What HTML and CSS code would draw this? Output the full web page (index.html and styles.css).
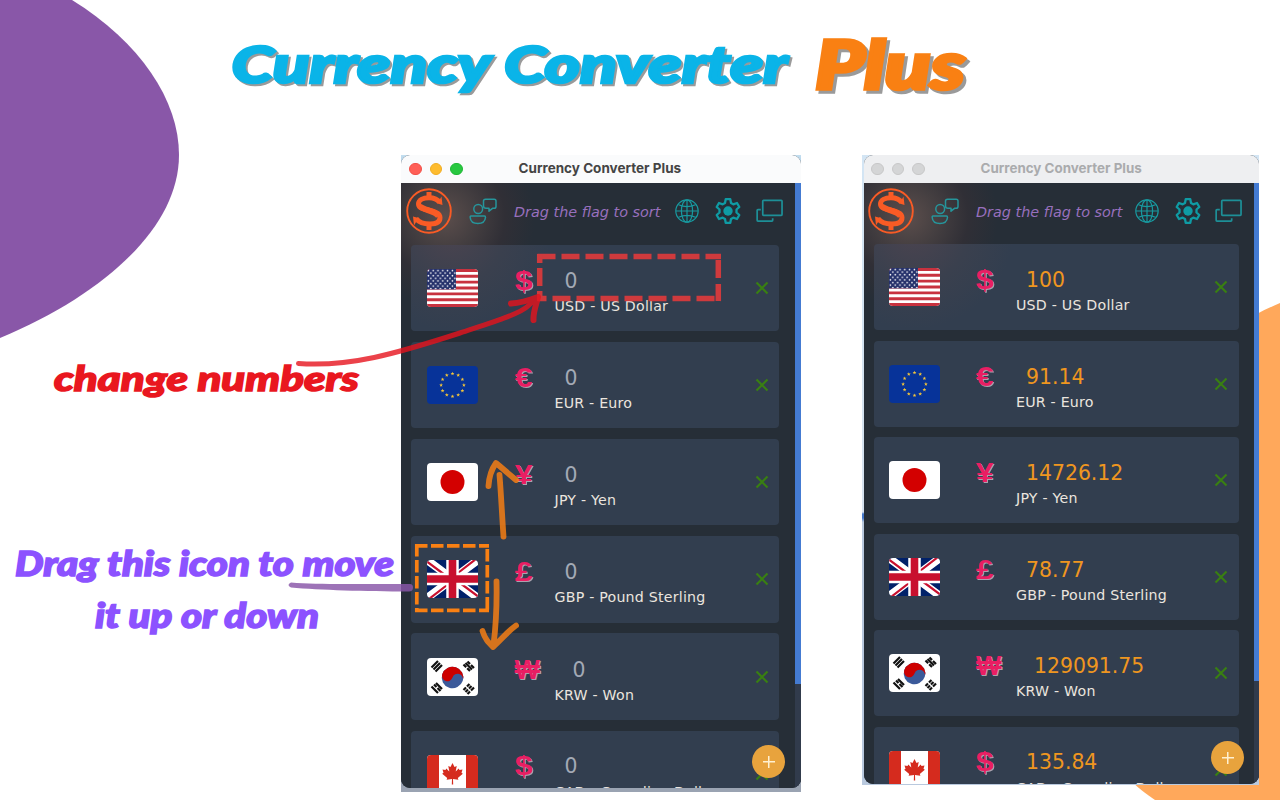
FILE: index.html
```
<!DOCTYPE html>
<html lang="en">
<head>
<meta charset="utf-8">
<title>Currency Converter Plus</title>
<link rel="stylesheet" href="styles.css">
</head>
<body>
<svg class="defs" width="0" height="0">
  <defs>
    <clipPath id="round"><rect width="51" height="38" rx="4"/></clipPath>
    <pattern id="stars" width="4.8" height="5.2" patternUnits="userSpaceOnUse"><circle cx="1.4" cy="1.5" r=".8" fill="#fff"/><circle cx="3.8" cy="4.1" r=".8" fill="#fff"/></pattern>
    <symbol id="us" viewBox="0 0 51 38"><g clip-path="url(#round)"><rect width="51" height="38" fill="#fff"/><path d="M0 1.46H51M0 7.3H51M0 13.15H51M0 19H51M0 24.85H51M0 30.7H51M0 36.54H51" stroke="#c8323f" stroke-width="2.92"/><rect width="29" height="20.4" fill="#25316b"/><rect width="29" height="20.4" fill="url(#stars)"/></g></symbol>
    <symbol id="eu" viewBox="0 0 51 38"><rect width="51" height="38" rx="4" fill="#073399"/><g fill="#f5c638" transform="translate(25.5 19)"><path id="st" d="M0-13.3l.5 1.3h1.4l-1.1.9.4 1.4L0-10.5l-1.2.8.4-1.4-1.1-.9H-.5Z"/><use href="#st" x="5.7" y="1.5"/><use href="#st" x="9.9" y="5.7"/><use href="#st" x="11.4" y="11.4"/><use href="#st" x="9.9" y="17.1"/><use href="#st" x="5.7" y="21.3"/><use href="#st" y="22.8"/><use href="#st" x="-5.7" y="21.3"/><use href="#st" x="-9.9" y="17.1"/><use href="#st" x="-11.4" y="11.4"/><use href="#st" x="-9.9" y="5.7"/><use href="#st" x="-5.7" y="1.5"/></g></symbol>
    <symbol id="jp" viewBox="0 0 51 38"><rect width="51" height="38" rx="4" fill="#fff"/><circle cx="25.5" cy="19" r="12" fill="#d30000"/></symbol>
    <symbol id="gb" viewBox="0 0 51 38"><g clip-path="url(#round)"><rect width="51" height="38" fill="#012169"/><path d="M0 0L51 38M51 0L0 38" stroke="#fff" stroke-width="8"/><path d="M-1 1L20 16.5M52 37L31 21.5M49 -1L29 14.5M2 39L22 23.5" stroke="#c8102e" stroke-width="2.2"/><path d="M25.5 0V38M0 19H51" stroke="#fff" stroke-width="12.5"/><path d="M25.5 0V38M0 19H51" stroke="#c8102e" stroke-width="7.6"/></g></symbol>
    <symbol id="kr" viewBox="0 0 51 38"><rect width="51" height="38" rx="4" fill="#fff"/><g transform="rotate(18 25.5 19.5)"><circle cx="25.5" cy="19.5" r="10.8" fill="#3b5a9a"/><path d="M14.7 19.5a10.8 10.8 0 0 1 21.6 0a5.4 5.4 0 0 0-10.8 0a5.4 5.4 0 0 1-10.8 0Z" fill="#cd0000"/></g><g stroke="#111" stroke-width="2.2"><path d="M4.5 9.5L11 3M6.5 11.5L13 5M8.5 13.5L15 7"/><path d="M36.500 6.500L39.200 9.200M40.200 10.200L43 13M38.500 5L45 11.500M40.500 3.500L43 6M44 7L47 10"/><path d="M4.500 28.500L11 35M7 26.500L9.500 29M10.500 30L13.500 33M9 25L15 31"/><path d="M36.500 32L39 29.500M40 28.500L42.500 26M38.500 34L41 31.500M42 30.500L44.500 28M40.500 36L43 33.500M44 32.500L47 29.500"/></g></symbol>
    <symbol id="ca" viewBox="0 0 51 38"><g clip-path="url(#round)"><rect width="51" height="38" fill="#fff"/><path d="M0 0H12V38H0ZM39 0H51V38H39Z" fill="#d52b1e"/><path d="M25.500 8l2 4 2.200-1-1 5.500 3-3 .8 1.600 3-.5-1 3.200 1.300.9-5 4.300.6 1.700-5.400-.7.200 5.500h-1.400l.2-5.500-5.400.7.600-1.700-5-4.300 1.300-.9-1-3.200 3 .5.800-1.600 3 3-1-5.500 2.200 1Z" fill="#d52b1e"/></g></symbol>
    <symbol id="logo" viewBox="0 0 46 46"><g fill="none" stroke="#f95b25"><circle cx="23" cy="23" r="21.800" stroke-width="1.900"/><path d="M33.500 14.500C31 10.500 27.500 9.800 23 9.800C17 9.800 12.500 11.800 12.500 16C12.500 24 34 20.500 34 29.500C34 34.500 29 36 24 36C18 36 13 34.500 10 30.500" stroke-width="5"/><path d="M13.500 18C18 22.500 28 22 32.500 28" stroke-width="6"/><path d="M23 4V10M23 36V42" stroke-width="5"/></g><path d="M35.500 8.500L36.500 17L31.500 15.500ZM8 37.500L7 28.500L12.500 30Z" fill="#f95b25"/></symbol>
    <symbol id="person" viewBox="0 0 28 27"><g fill="none" stroke="#26959b" stroke-width="1.500" stroke-linejoin="round"><circle cx="9.200" cy="11" r="4.400"/><path d="M2 18H15.500Q16.500 18 16.500 19.500C16 24 13 25.500 9 25.500C5 25.500 1.500 24 1.200 19.500Q1 18 2 18Z"/><path d="M16.500 1.200H25.200Q27 1.200 27 3V8.500Q27 10.300 25.200 10.300H23.500L20 13.200V10.300H17Q14.500 10.300 14.500 8V3Q14.500 1.200 16.500 1.200Z"/></g></symbol>
    <symbol id="globe" viewBox="0 0 24 24"><g fill="none" stroke="#18999f" stroke-width="1.200"><circle cx="12" cy="12" r="11.200"/><ellipse cx="12" cy="12" rx="5.600" ry="11.200"/><path d="M12 1V23M1 12H23M3.500 5.800Q12 9.500 20.500 5.800M3.500 18.200Q12 14.500 20.500 18.200"/></g></symbol>
    <symbol id="gear" viewBox="0 0 26 26"><circle cx="13" cy="13" r="4.700" fill="#0f9ba4"/><path d="M10.700 1.200H15.300L16 5L18.300 6.300L22 5L24.300 9L21.500 11.500V14.500L24.300 17L22 21L18.300 19.700L16 21L15.300 24.800H10.700L10 21L7.700 19.700L4 21L1.700 17L4.500 14.500V11.500L1.700 9L4 5L7.700 6.300L10 5Z" fill="none" stroke="#0f9ba4" stroke-width="2.300" stroke-linejoin="round"/></symbol>
    <symbol id="wins" viewBox="0 0 28 24"><g fill="none" stroke="#1d8f97" stroke-width="1.800"><rect x="7" y="1" width="20" height="15.500" rx=".8"/><path d="M5 10.500H2Q1.200 10.500 1.200 11.300V21.700Q1.200 22.500 2 22.500H16.500Q17.300 22.500 17.300 21.700V19.500"/></g></symbol>
    <symbol id="x" viewBox="0 0 14 14"><path d="M1.500 1.500L12.500 12.500M12.500 1.500L1.500 12.500" stroke="#397f12" stroke-width="2.200"/></symbol>
  </defs>
</svg>

<main class="poster">
  <svg class="layer" viewBox="0 0 1280 800">
    <path d="M0 0H72C140 42 179 100 179 155C179 228 103 295 0 338Z" fill="#8957a8"/>
    <path d="M1280 303C1170 350 1090 450 1080 600C1075 700 1095 760 1155 800H1280Z" fill="#ffa85b"/>
  </svg>

  <h1 class="headline">
    <svg class="headline-art" viewBox="0 0 1280 155">
      <g class="display">
        <text class="blue" x="231.500" y="83" font-size="52" textLength="556" lengthAdjust="spacingAndGlyphs">Currency Converter</text>
        <text class="orange" x="815" y="89" font-size="66.500" textLength="150" lengthAdjust="spacingAndGlyphs">Plus</text>
      </g>
    </svg>
  </h1>

  <div class="screens">
    <section class="shot active">
      <div class="window">
        <div class="titlebar"><i class="dot red"></i><i class="dot yellow"></i><i class="dot green"></i><span class="title">Currency Converter Plus</span></div>
        <div class="app">
          <div class="toolbar"><svg class="logo"><use href="#logo"/></svg><svg class="person"><use href="#person"/></svg><span class="hint">Drag the flag to sort</span><svg class="globe"><use href="#globe"/></svg><svg class="gear"><use href="#gear"/></svg><svg class="wins"><use href="#wins"/></svg></div>
          <div class="list">
            <div class="card"><svg class="flag"><use href="#us"/></svg><div class="info"><div class="amount"><b class="sign">$</b><span class="value">0</span></div><div class="name">USD - US Dollar</div></div><svg class="remove"><use href="#x"/></svg></div>
            <div class="card"><svg class="flag"><use href="#eu"/></svg><div class="info"><div class="amount"><b class="sign">€</b><span class="value">0</span></div><div class="name">EUR - Euro</div></div><svg class="remove"><use href="#x"/></svg></div>
            <div class="card"><svg class="flag"><use href="#jp"/></svg><div class="info"><div class="amount"><b class="sign">¥</b><span class="value">0</span></div><div class="name">JPY - Yen</div></div><svg class="remove"><use href="#x"/></svg></div>
            <div class="card"><svg class="flag"><use href="#gb"/></svg><div class="info"><div class="amount"><b class="sign">£</b><span class="value">0</span></div><div class="name">GBP - Pound Sterling</div></div><svg class="remove"><use href="#x"/></svg></div>
            <div class="card"><svg class="flag"><use href="#kr"/></svg><div class="info"><div class="amount"><b class="sign wide">₩</b><span class="value">0</span></div><div class="name">KRW - Won</div></div><svg class="remove"><use href="#x"/></svg></div>
            <div class="card"><svg class="flag"><use href="#ca"/></svg><div class="info"><div class="amount"><b class="sign">$</b><span class="value">0</span></div><div class="name">CAD - Canadian Dollar</div></div><svg class="remove"><use href="#x"/></svg></div>
          </div>
          <div class="scroll"></div>
          <div class="add"></div>
        </div>
      </div>
    </section>

    <section class="shot inactive">
      <div class="window">
        <div class="titlebar"><i class="dot"></i><i class="dot"></i><i class="dot"></i><span class="title">Currency Converter Plus</span></div>
        <div class="app">
          <div class="toolbar"><svg class="logo"><use href="#logo"/></svg><svg class="person"><use href="#person"/></svg><span class="hint">Drag the flag to sort</span><svg class="globe"><use href="#globe"/></svg><svg class="gear"><use href="#gear"/></svg><svg class="wins"><use href="#wins"/></svg></div>
          <div class="list">
            <div class="card"><svg class="flag"><use href="#us"/></svg><div class="info"><div class="amount"><b class="sign">$</b><span class="value">100</span></div><div class="name">USD - US Dollar</div></div><svg class="remove"><use href="#x"/></svg></div>
            <div class="card"><svg class="flag"><use href="#eu"/></svg><div class="info"><div class="amount"><b class="sign">€</b><span class="value">91.14</span></div><div class="name">EUR - Euro</div></div><svg class="remove"><use href="#x"/></svg></div>
            <div class="card"><svg class="flag"><use href="#jp"/></svg><div class="info"><div class="amount"><b class="sign">¥</b><span class="value">14726.12</span></div><div class="name">JPY - Yen</div></div><svg class="remove"><use href="#x"/></svg></div>
            <div class="card"><svg class="flag"><use href="#gb"/></svg><div class="info"><div class="amount"><b class="sign">£</b><span class="value">78.77</span></div><div class="name">GBP - Pound Sterling</div></div><svg class="remove"><use href="#x"/></svg></div>
            <div class="card"><svg class="flag"><use href="#kr"/></svg><div class="info"><div class="amount"><b class="sign wide">₩</b><span class="value">129091.75</span></div><div class="name">KRW - Won</div></div><svg class="remove"><use href="#x"/></svg></div>
            <div class="card"><svg class="flag"><use href="#ca"/></svg><div class="info"><div class="amount"><b class="sign">$</b><span class="value">135.84</span></div><div class="name">CAD - Canadian Dollar</div></div><svg class="remove"><use href="#x"/></svg></div>
          </div>
          <div class="scroll"></div>
          <div class="add"></div>
        </div>
      </div>
    </section>
  </div>

  <svg class="layer" viewBox="0 0 1280 800">
    <g class="display">
      <text class="red-text" x="54" y="391" font-size="34.500" textLength="305" lengthAdjust="spacingAndGlyphs">change numbers</text>
      <text class="violet" x="15" y="576" font-size="33.500" textLength="379" lengthAdjust="spacingAndGlyphs">Drag this icon to move</text>
      <text class="violet" x="95" y="628" font-size="33.500" textLength="224" lengthAdjust="spacingAndGlyphs">it up or down</text>
    </g>
    <g fill="none" stroke="#cf3a3d" stroke-width="5.500">
      <path d="M537.500 256.500H721" stroke-dasharray="18 6"/>
      <path d="M537.500 298.500H721" stroke-dasharray="18 6" stroke-dashoffset="9"/>
      <path d="M539.700 254V301" stroke-dasharray="9 5 18 5 20"/>
      <path d="M718.300 260V301" stroke-dasharray="18 6"/>
    </g>
    <g fill="none" stroke="#e7131d" stroke-width="5" stroke-linecap="round" stroke-linejoin="round" opacity=".8">
      <path d="M298.500 363.500C350 367 395 354 460 333C490 323 520 314 528 306L538 297"/>
      <path d="M511 303.500C520 303 530 300 538 297C536 306 533 312 533.500 320" stroke-width="6"/>
    </g>
    <g fill="none" stroke="#f98013">
      <path d="M415 545.800H489M415 610.300H489" stroke-width="3.700" stroke-dasharray="12.500 3.500"/>
      <path d="M416.800 544V612M487.300 549V612" stroke-width="3.700" stroke-dasharray="12.500 3.500"/>
    </g>
    <g fill="none" stroke="#f98013" stroke-width="5.800" stroke-linecap="round" stroke-linejoin="round" opacity=".83">
      <path d="M503.500 536.500C502 515 501 493 499.500 475M488.500 486C489 477 491 470 496 463L516 480"/>
      <path d="M496.500 581.500C497 605 496 625 493.500 645M482.500 631C485 639 488 642 493 647C501 640 507 632 516 625.500"/>
    </g>
    <path d="M291 582.500C320 585 365 583.500 410 584Q413 584 413 587.500Q413 591.500 409 591.500C365 591.500 320 590 291 587.500Q286 585 291 582.500Z" fill="#8957a8" opacity=".83"/>
  </svg>
</main>
</body>
</html>
```
FILE: styles.css
```
* { box-sizing: border-box; }
body { margin: 0; background: #fff; overflow: hidden; }
.defs { position: absolute; }
.poster { position: relative; width: 1280px; height: 800px; overflow: hidden; }
.layer { position: absolute; left: 0; top: 0; width: 1280px; height: 800px; }
.headline { position: relative; margin: 0; height: 155px; }
.headline-art { display: block; width: 1280px; height: 155px; }
.display { font-family: Lato, "Open Sans", sans-serif; font-weight: 900; font-style: italic; stroke-width: 1.500px; }
.blue { fill: #0ab4e8; stroke: #0ab4e8; stroke-width: 2.600px; filter: drop-shadow(2px 2px 0 #9a9a9a); }
.orange { fill: #f98013; stroke: #f98013; stroke-width: 3.600px; filter: drop-shadow(3px 3px 0 #9a9a9a); }
.red-text { fill: #e9171f; stroke: #e9171f; }
.violet { fill: #8c52ff; stroke: #8c52ff; }

.screens { position: relative; display: flex; align-items: flex-start; gap: 61px; padding-left: 401px; }
.shot { flex: none; }
.active { --card: 86.400px; --pitch-gap: 10.800px; width: 400px; height: 637px; background: linear-gradient(#c4dff0 0, #8fb8dc 20px, #a1abba 50%, #9aa3b2 85%); }
.inactive { --card: 86px; --pitch-gap: 10.500px; width: 397px; height: 630px; padding-left: 2px; background: linear-gradient(#d3e5f4 0, #d7e3ef 357px, #4478cc 359px, #4478cc 363px, #b9c9de 367px); }
.window { display: flex; flex-direction: column; height: 633px; border-radius: 9px; overflow: hidden; background: #262e37; font-family: Verdana, "DejaVu Sans", sans-serif; }
.inactive .window { height: 629px; }

.titlebar { display: flex; align-items: center; flex: none; height: 28px; padding-left: 8px; gap: 8px; background: #fafbfc; color: #444; }
.dot { width: 12.500px; height: 12.500px; border-radius: 50%; background: #d4d5d6; border: 1px solid #c7c7c8; }
.dot.red { background: #ff5f57; border-color: #f25048; }
.dot.yellow { background: #febc2e; border-color: #f0ad22; }
.dot.green { background: #28c840; border-color: #1fb735; }
.title { flex: 1; margin-left: 48px; padding-bottom: 2px; font: 700 13.500px/26px Inter, sans-serif; white-space: nowrap; }
.inactive .titlebar { padding-left: 7px; background: #eeeff1; color: #aaabad; }
.inactive .title { font-size: 13.400px; }

.app { position: relative; flex: 1; min-height: 0; overflow: hidden; background: radial-gradient(circle at 44px 34px, #5c4e4c 0, #453f41 30px, #302f36 60px, #262e37 90px); }
.toolbar { display: flex; align-items: center; height: 61.700px; padding: 0 0 5.700px 5px; }
.toolbar svg, .card svg { flex: none; display: block; }
.logo { width: 46px; height: 46px; }
.person { width: 28px; height: 27px; margin-left: 17px; }
.hint { flex: none; width: 161px; margin-left: 17px; padding-top: 1px; color: #9870bd; font: italic 14.400px/20px "DejaVu Sans", sans-serif; white-space: nowrap; }
.globe { width: 24px; height: 24px; }
.gear { width: 26px; height: 26px; margin-left: 16px; }
.wins { width: 27px; height: 24px; margin-left: 15px; }

.list { display: flex; flex-direction: column; gap: var(--pitch-gap); padding-left: 10px; }
.card { display: flex; align-items: center; flex: none; width: 368px; height: var(--card); padding: 0 10.500px 0 15.500px; border-radius: 4px; background: #323e4f; }
.card:first-child { background: radial-gradient(circle at 40px -15px, #4c444f 0, #3a404e 55px, #323e4f 100px); }
.flag { width: 51px; height: 38px; }
.info { flex: 1; min-width: 0; margin-left: 37px; padding-top: 11px; }
.amount { display: flex; align-items: center; height: 26px; }
.sign { width: 50px; margin-top: -2px; transform: scaleX(1.12); transform-origin: 0 50%; color: #e91e63; font: 700 28.500px/26px "Liberation Sans", "DejaVu Sans", sans-serif; text-shadow: 1px 1px 0 #aaa2ae; }
.sign.wide { width: 58px; margin-top: 0; font-size: 27px; transform: none; }
.value { color: #a3a9b5; font-size: 20.400px; line-height: 26px; }
.name { padding-left: 40px; color: #ebe5df; font-size: 14.200px; line-height: 25px; letter-spacing: .22px; white-space: nowrap; }
.card:last-child .name { padding-top: 1px; }
.remove { width: 14px; height: 14px; }

.inactive .toolbar { height: 61px; padding: 0 0 5px 4px; }
.inactive .hint { width: 159px; }
.inactive .gear { margin-left: 15.500px; }
.inactive .wins { margin-left: 14.500px; }
.inactive .card { width: 365px; padding: 0 11px 0 15px; }
.inactive .info { margin-left: 36px; }
.inactive .value { color: #ef961f; }

.scroll { position: absolute; right: 0; top: 0; width: 6px; height: 100%; background: linear-gradient(#447bd2 0 501px, #313b4c 501px); }
.inactive .scroll { width: 5px; background: linear-gradient(#447bd2 0 498px, #313b4c 498px); }
.add { position: absolute; right: 16px; bottom: 10px; width: 33px; height: 33px; border-radius: 50%; background: linear-gradient(#fff0d0, #fff0d0) center / 12px 1.500px no-repeat, linear-gradient(#fff0d0, #fff0d0) center / 1.500px 12px no-repeat, #e8a33d; }
.inactive .add { right: 15px; }
```
